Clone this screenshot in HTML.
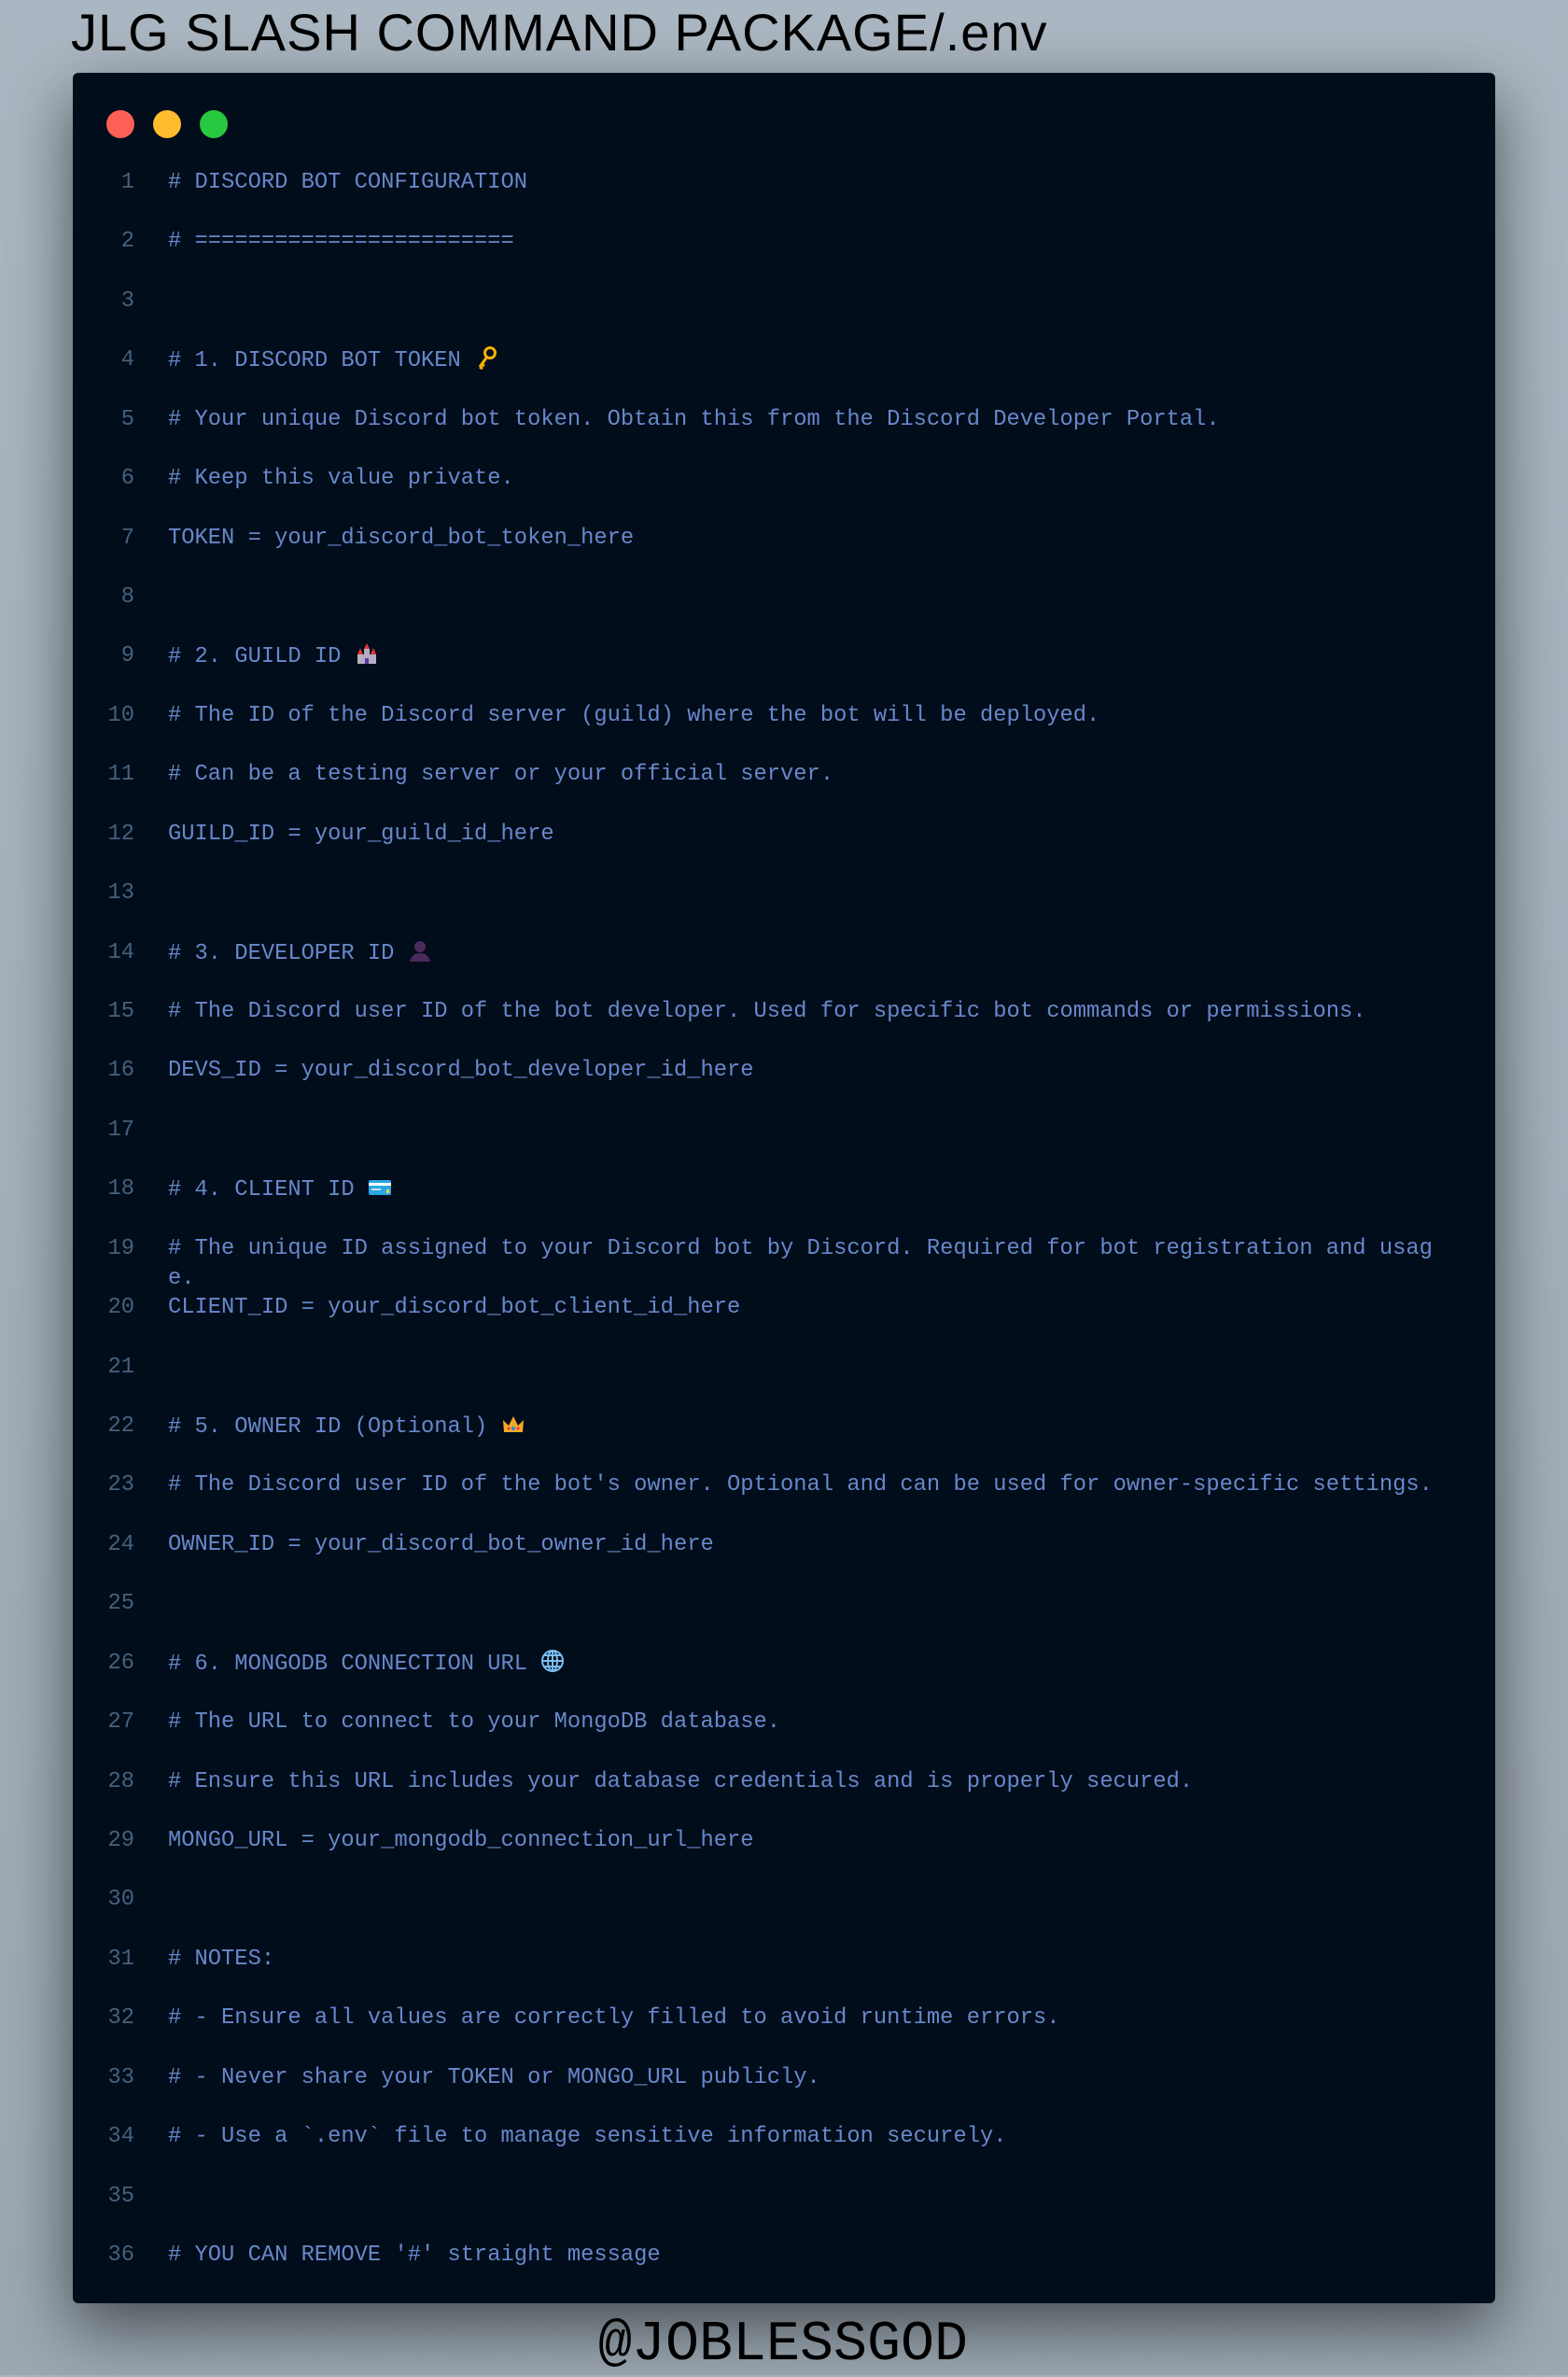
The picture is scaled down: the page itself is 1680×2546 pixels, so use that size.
<!DOCTYPE html>
<html><head><meta charset="utf-8"><style>
html,body{margin:0;padding:0}
body{width:1680px;height:2544px;position:relative;overflow:hidden;background:linear-gradient(180deg,#aab6c1 0%,#a3afba 50%,#9ba7b1 100%);font-family:"Liberation Mono",monospace}
.title{position:absolute;left:76px;top:2px;font-family:"Liberation Sans",sans-serif;font-size:56px;color:#000;white-space:nowrap;letter-spacing:1px;transform-origin:left top}
.win{position:absolute;left:78px;top:78px;width:1524px;height:2389px;background:#010d1a;border-radius:6px;box-shadow:0 25px 70px rgba(0,0,0,.55)}
.dot{position:absolute;top:118px;width:30px;height:30px;border-radius:50%}
.row{position:absolute;left:0;width:1680px;height:63.43px;font-size:23.77px;line-height:32px;color:#6888cc;margin-top:3px}
.n{position:absolute;left:100px;width:44px;text-align:right;color:#46607e}
.c{position:absolute;left:180px;width:95ch;white-space:pre-wrap;word-break:break-all}
.e{display:inline-block;width:26px;height:26px;vertical-align:-4px}
.foot{position:absolute;left:641px;top:2478px;font-size:60px;color:#000;font-family:"Liberation Mono",monospace;letter-spacing:0}
</style></head><body>
<div class="title">JLG SLASH COMMAND PACKAGE/.env</div>
<div class="win"></div>
<div class="dot" style="left:114px;background:#fe5f57"></div>
<div class="dot" style="left:164px;background:#febc2e"></div>
<div class="dot" style="left:214px;background:#28c840"></div>

<div class="row" style="top:177px"><span class="n">1</span><span class="c"># DISCORD BOT CONFIGURATION</span></div>
<div class="row" style="top:240.4px"><span class="n">2</span><span class="c"># ========================</span></div>
<div class="row" style="top:303.9px"><span class="n">3</span><span class="c"></span></div>
<div class="row" style="top:367.3px"><span class="n">4</span><span class="c"># 1. DISCORD BOT TOKEN <svg class="e" viewBox="0 0 26 26"><circle cx="17" cy="8" r="5.5" fill="none" stroke="#f4b400" stroke-width="3"/><path d="M14 12 L6 23 M8 20 L11 22 M6 23 L9 25" stroke="#f4b400" stroke-width="3" fill="none"/></svg></span></div>
<div class="row" style="top:430.7px"><span class="n">5</span><span class="c"># Your unique Discord bot token. Obtain this from the Discord Developer Portal.</span></div>
<div class="row" style="top:494.2px"><span class="n">6</span><span class="c"># Keep this value private.</span></div>
<div class="row" style="top:557.6px"><span class="n">7</span><span class="c">TOKEN = your_discord_bot_token_here</span></div>
<div class="row" style="top:621px"><span class="n">8</span><span class="c"></span></div>
<div class="row" style="top:684.4px"><span class="n">9</span><span class="c"># 2. GUILD ID <svg class="e" viewBox="0 0 26 26"><rect x="3" y="14" width="20" height="10" fill="#b3aec4"/><rect x="10" y="8" width="6" height="8" fill="#b3aec4"/><path d="M3 14 L6 7 L9 14Z M17 14 L20 7 L23 14Z M10 8 L13 2 L16 8Z" fill="#e8343c"/><rect x="11" y="18" width="4" height="6" fill="#5b3aa0"/></svg></span></div>
<div class="row" style="top:747.9px"><span class="n">10</span><span class="c"># The ID of the Discord server (guild) where the bot will be deployed.</span></div>
<div class="row" style="top:811.3px"><span class="n">11</span><span class="c"># Can be a testing server or your official server.</span></div>
<div class="row" style="top:874.7px"><span class="n">12</span><span class="c">GUILD_ID = your_guild_id_here</span></div>
<div class="row" style="top:938.2px"><span class="n">13</span><span class="c"></span></div>
<div class="row" style="top:1001.6px"><span class="n">14</span><span class="c"># 3. DEVELOPER ID <svg class="e" viewBox="0 0 26 26"><circle cx="13" cy="9" r="6" fill="#4a2a5a"/><path d="M2 25 Q4 16 13 16 Q22 16 24 25Z" fill="#4a2a5a"/></svg></span></div>
<div class="row" style="top:1065px"><span class="n">15</span><span class="c"># The Discord user ID of the bot developer. Used for specific bot commands or permissions.</span></div>
<div class="row" style="top:1128.4px"><span class="n">16</span><span class="c">DEVS_ID = your_discord_bot_developer_id_here</span></div>
<div class="row" style="top:1191.9px"><span class="n">17</span><span class="c"></span></div>
<div class="row" style="top:1255.3px"><span class="n">18</span><span class="c"># 4. CLIENT ID <svg class="e" viewBox="0 0 26 26"><rect x="1" y="6" width="24" height="16" rx="2" fill="#29a8e6"/><rect x="1" y="9" width="24" height="3" fill="#fff"/><rect x="4" y="15" width="10" height="2" fill="#cde"/><rect x="20" y="16" width="3" height="4" fill="#f4d03f"/></svg></span></div>
<div class="row" style="top:1318.7px"><span class="n">19</span><span class="c"># The unique ID assigned to your Discord bot by Discord. Required for bot registration and usage.</span></div>
<div class="row" style="top:1382.1px"><span class="n">20</span><span class="c">CLIENT_ID = your_discord_bot_client_id_here</span></div>
<div class="row" style="top:1445.6px"><span class="n">21</span><span class="c"></span></div>
<div class="row" style="top:1509px"><span class="n">22</span><span class="c"># 5. OWNER ID (Optional) <svg class="e" viewBox="0 0 26 26"><path d="M3 22 L2 9 L8 15 L13 5 L18 15 L24 9 L23 22Z" fill="#f4a82a"/><circle cx="8" cy="18" r="1.5" fill="#e33"/><circle cx="13" cy="18" r="2" fill="#2a8ae0"/><circle cx="18" cy="18" r="1.5" fill="#e33"/></svg></span></div>
<div class="row" style="top:1572.4px"><span class="n">23</span><span class="c"># The Discord user ID of the bot's owner. Optional and can be used for owner-specific settings.</span></div>
<div class="row" style="top:1635.9px"><span class="n">24</span><span class="c">OWNER_ID = your_discord_bot_owner_id_here</span></div>
<div class="row" style="top:1699.3px"><span class="n">25</span><span class="c"></span></div>
<div class="row" style="top:1762.7px"><span class="n">26</span><span class="c"># 6. MONGODB CONNECTION URL <svg class="e" viewBox="0 0 26 26" fill="none" stroke="#7cbcf0" stroke-width="2"><circle cx="13" cy="13" r="11"/><ellipse cx="13" cy="13" rx="5" ry="11"/><path d="M13 2 V24 M2 13 H24 M4 7 H22 M4 19 H22"/></svg></span></div>
<div class="row" style="top:1826.2px"><span class="n">27</span><span class="c"># The URL to connect to your MongoDB database.</span></div>
<div class="row" style="top:1889.6px"><span class="n">28</span><span class="c"># Ensure this URL includes your database credentials and is properly secured.</span></div>
<div class="row" style="top:1953px"><span class="n">29</span><span class="c">MONGO_URL = your_mongodb_connection_url_here</span></div>
<div class="row" style="top:2016.4px"><span class="n">30</span><span class="c"></span></div>
<div class="row" style="top:2079.9px"><span class="n">31</span><span class="c"># NOTES:</span></div>
<div class="row" style="top:2143.3px"><span class="n">32</span><span class="c"># - Ensure all values are correctly filled to avoid runtime errors.</span></div>
<div class="row" style="top:2206.7px"><span class="n">33</span><span class="c"># - Never share your TOKEN or MONGO_URL publicly.</span></div>
<div class="row" style="top:2270.2px"><span class="n">34</span><span class="c"># - Use a `.env` file to manage sensitive information securely.</span></div>
<div class="row" style="top:2333.6px"><span class="n">35</span><span class="c"></span></div>
<div class="row" style="top:2397px"><span class="n">36</span><span class="c"># YOU CAN REMOVE '#' straight message</span></div>

<div class="foot">@JOBLESSGOD</div>
</body></html>
